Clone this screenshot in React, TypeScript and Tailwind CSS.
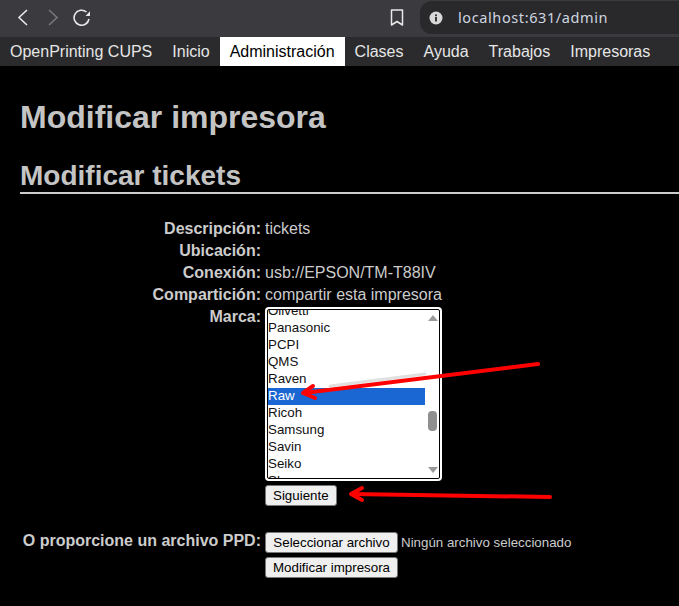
const MENU = ["Inicio", "Administración", "Clases", "Ayuda", "Trabajos", "Impresoras"];
const BRANDS = ["Olivetti", "Panasonic", "PCPI", "QMS", "Raven", "Raw", "Ricoh", "Samsung", "Savin", "Seiko", "Sharp"];

function Row({ label, children }: { label: string; children?: React.ReactNode }) {
  return (
    <>
      <div className="text-right font-bold leading-[22px] whitespace-nowrap">{label}</div>
      <div className="leading-[22px] whitespace-nowrap">{children}</div>
    </>
  );
}

function Btn({ wide, children }: { wide?: boolean; children: React.ReactNode }) {
  return (
    <button className={wide ? "w-[133px] h-[21px] rounded-[3px] border border-[#767676] bg-[#efefef] text-[13.33px] leading-[19px] text-black whitespace-nowrap" : "h-[21px] px-[7px] rounded-[3px] border border-[#767676] bg-[#efefef] text-[13.33px] leading-[19px] text-black whitespace-nowrap"}>
      {children}
    </button>
  );
}

function BrandList() {
  return (
    <div className="w-[177px] h-[174px] rounded-[4px] border-2 border-white bg-white flex outline-1 -outline-offset-3 outline-black py-[1px]">
      <div className="w-[158px] h-full overflow-hidden">
        <div className="-mt-[7px] text-[13.33px] leading-[15px] text-[#111]">
          {BRANDS.map((b) => (
            <div key={b} className={b === "Raw" ? "h-[17px] pl-[1px] bg-[#1a66d2] text-white" : "h-[17px] pl-[1px]"}>
              {b}
            </div>
          ))}
        </div>
      </div>
      <div className="relative w-[15px] h-full">
        <div className="absolute left-[3px] top-[5px] w-0 h-0 border-x-[5px] border-x-transparent border-b-[6px] border-b-[#9a9a9a]" />
        <div className="absolute left-[3px] top-[101px] w-[9px] h-[20px] rounded-[4px] bg-[#8f8f8f]" />
        <div className="absolute left-[3px] bottom-[5px] w-0 h-0 border-x-[5px] border-x-transparent border-t-[6px] border-t-[#9a9a9a]" />
      </div>
    </div>
  );
}

export default function App() {
  return (
    <div className="relative w-[679px] h-[606px] overflow-hidden bg-black text-[#cccccc] text-[16px] font-['Liberation_Sans',Arial,sans-serif]">
      <div className="h-[37px] pt-[1px] pb-[3px] bg-[#3a3a3f] flex items-center">
        <svg className="ml-[17px] text-[#e8e8e8]" width="11" height="17" viewBox="0 0 11 17" fill="none" stroke="currentColor" strokeWidth="1.6">
          <path d="M10 1 L2 8.5 L10 16" />
        </svg>
        <svg className="ml-[19px] text-[#77777b]" width="11" height="17" viewBox="0 0 11 17" fill="none" stroke="currentColor" strokeWidth="1.6">
          <path d="M2 1 L10 8.5 L2 16" />
        </svg>
        <svg className="ml-[15px] text-[#e8e8e8]" width="18" height="18" viewBox="0 0 18 18" fill="none" stroke="currentColor" strokeWidth="1.6">
          <path d="M16 10 A7.5 7.5 0 1 1 13.5 3" />
          <path d="M12.5 7 L17 7 L17 2.2 Z" fill="currentColor" stroke="none" />
        </svg>
        <svg className="ml-[299px] text-[#e8e8e8]" width="14" height="18" viewBox="0 0 14 18" fill="none" stroke="currentColor" strokeWidth="1.5" strokeLinejoin="round">
          <path d="M1.5 1 H12.5 V16 L7 12.5 L1.5 16 Z" />
        </svg>
        <div className="ml-[16px] h-[33px] flex-1 rounded-l-[12px] bg-[#29292c] flex items-center">
          <svg className="ml-[9px]" width="14" height="14" viewBox="0 0 14 14">
            <circle cx="7" cy="7" r="6.5" fill="#d8d8d8" />
            <rect x="6.1" y="6" width="1.8" height="4.5" fill="#29292c" />
            <rect x="6.1" y="3.4" width="1.8" height="1.8" fill="#29292c" />
          </svg>
          <span className="ml-[15px] text-[14.5px] tracking-[0.6px] text-[#cfd6e0] font-['Noto_Sans',sans-serif]">localhost:631/admin</span>
        </div>
      </div>

      <nav className="h-[29px] bg-[#2b2b2d] flex text-[#e6e6e6] leading-[29px]">
        <span className="px-[10px]">OpenPrinting CUPS</span>
        {MENU.map((m) => (
          <span key={m} className={m === "Administración" ? "px-[10px] bg-white text-black" : "px-[10px]"}>
            {m}
          </span>
        ))}
      </nav>

      <main className="pl-[20px]">
        <h1 className="mt-[33px] text-[32px] leading-[37px] font-bold text-[#c4c4c4]">Modificar impresora</h1>
        <h2 className="mt-[23px] border-b-2 border-[#cccccc] text-[28px] leading-[33px] font-bold text-[#c4c4c4]">Modificar tickets</h2>

        <div className="mt-[24px] grid grid-cols-[241px_1fr] gap-x-[4px]">
          <Row label="Descripción:">tickets</Row>
          <Row label="Ubicación:" />
          <Row label="Conexión:">usb://EPSON/TM-T88IV</Row>
          <Row label="Compartición:">compartir esta impresora</Row>
          <Row label="Marca:">
            <div className="pt-[1px] flex flex-col items-start gap-[4px]">
              <BrandList />
              <Btn>Siguiente</Btn>
            </div>
          </Row>
          <div className="mt-[24px] text-right font-bold leading-[22px] whitespace-nowrap">O proporcione un archivo PPD:</div>
          <div className="mt-[26px] flex flex-col items-start gap-[4px]">
            <div className="flex items-center gap-[3px]">
              <Btn wide>Seleccionar archivo</Btn>
              <span className="text-[13.33px]">Ningún archivo seleccionado</span>
            </div>
            <Btn wide>Modificar impresora</Btn>
          </div>
        </div>
      </main>

      <svg className="absolute left-0 top-0 pointer-events-none" width="679" height="606" fill="none" strokeLinecap="round" strokeLinejoin="round">
        <path d="M425 374 L330 386" stroke="#000000" strokeOpacity="0.12" strokeWidth="3" />
        <g stroke="#ff0000">
          <path d="M538 364 L304 393" strokeWidth="4" />
          <path d="M313 386 L303 393 L315 398" strokeWidth="4" />
          <path d="M550 497 L352 494" strokeWidth="4" />
          <path d="M362 488 L351 494 L362 500" strokeWidth="4" />
        </g>
      </svg>
    </div>
  );
}
